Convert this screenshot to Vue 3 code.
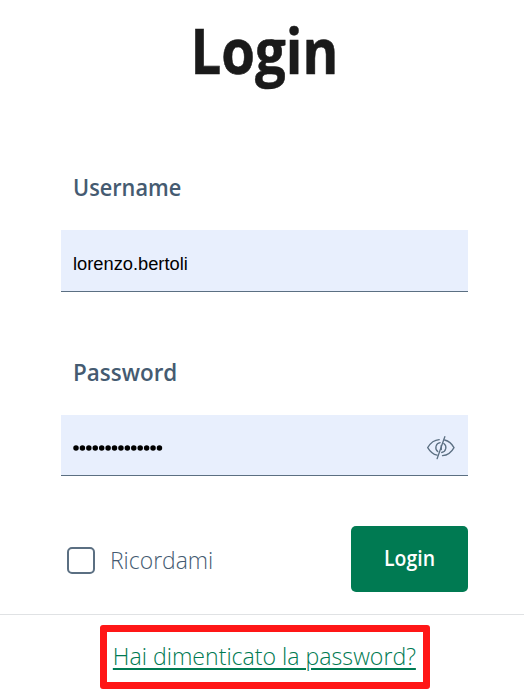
<script setup>
import { ref } from 'vue'

const username = ref('lorenzo.bertoli')
const password = ref('xxxxxxxxxxxxxx')
const remember = ref(false)
</script>

<template>
  <main class="page">
    <h1 class="title"><span class="t-title">Login</span></h1>
    <form class="form" @submit.prevent>
      <label class="label" for="username"><span class="t-user">Username</span></label>
      <div class="field field-user">
        <input id="username" v-model="username" class="input" type="text" />
      </div>
      <label class="label label-pass" for="password"><span class="t-pass">Password</span></label>
      <div class="field field-pass">
        <svg class="dots" width="92" height="8" viewBox="0 0 92 8" fill="#000">
          <circle v-for="(c, i) in password.split('')" :key="i" :cx="3 + i * 6.42" cy="4" r="2.75" />
        </svg>
        <svg class="eye" width="30" height="26" viewBox="0 0 30 26" fill="none" stroke="#5b6f82" stroke-width="1.3" stroke-linecap="round">
          <path d="M13.2 4.7C8.6 5 4.5 8 1.7 12.6C4.2 16.8 7.2 19.3 11.1 20.2" />
          <path d="M18.6 5C22.6 6 25.8 8.6 28 12.6C25.4 17.4 21.5 20.3 16.5 20.6" />
          <path d="M14.1 7.7A5 5 0 0 0 11.8 16.6" />
          <path d="M17.8 8.5A5 5 0 0 1 15.7 17.5" />
          <path d="M15.3 10.5V14.5" />
          <path d="M18.8 1.7L11.1 23.7" />
        </svg>
      </div>
      <div class="actions">
        <label class="remember">
          <input v-model="remember" class="check" type="checkbox" />
          <span class="t-rem">Ricordami</span>
        </label>
        <button class="submit" type="submit"><span class="t-submit">Login</span></button>
      </div>
    </form>
    <footer class="footer">
      <div class="frame"><a class="forgot" href="#">Hai dimenticato la password?</a></div>
    </footer>
  </main>
</template>

<style>
body {
  background: #fff;
}
</style>

<style scoped>
.page {
  box-sizing: border-box;
  height: 700px;
  overflow: hidden;
  font-family: "Open Sans", "Noto Sans", sans-serif;
  color: #455b71;
}
.title {
  height: 102px;
  margin: 0;
  padding-left: 5px;
  line-height: 100px;
  font-size: 63px;
  font-weight: 700;
  text-align: center;
  color: #1a1a1a;
}
.title span,
.label span,
.t-rem,
.t-submit {
  display: inline-block;
  transform-origin: 0 50%;
}
.title .t-title {
  transform: scaleX(0.865);
  transform-origin: 50% 50%;
  -webkit-text-stroke: 0.6px #1a1a1a;
}
.form {
  width: 407px;
  margin-left: 61px;
  padding-top: 68px;
}
.label {
  display: block;
  height: 36px;
  padding-left: 12px;
  line-height: 34px;
  font-size: 24px;
  font-weight: 600;
}
.label .t-user {
  transform: scaleX(0.905);
}
.label .t-pass {
  transform: scaleX(0.935);
}
.field {
  box-sizing: border-box;
  display: flex;
  align-items: center;
  margin-top: 24px;
  padding: 0 12px;
  background: #e8effd;
  border-bottom: 1px solid #5b6f82;
}
.field-user {
  height: 62px;
  padding-top: 7px;
}
.field-pass {
  height: 61px;
  justify-content: space-between;
}
.label-pass {
  margin-top: 63px;
}
.input {
  width: 100%;
  padding: 0;
  border: 0;
  outline: 0;
  background: transparent;
  font: 18.3px "Liberation Sans", Arial, sans-serif;
  color: #000;
}
.dots {
  margin-top: 5px;
}
.eye {
  margin: 5px 0 0;
}
.actions {
  display: flex;
  justify-content: space-between;
  align-items: center;
  height: 66px;
  margin-top: 50px;
}
.remember {
  display: flex;
  align-items: center;
  gap: 15px;
  padding: 3px 0 0 6px;
  font-size: 24px;
  line-height: 30px;
  font-weight: 300;
}
.t-rem {
  padding-bottom: 2px;
  transform: scaleX(0.955);
}
.check {
  box-sizing: border-box;
  width: 28px;
  height: 27px;
  margin: 0;
  appearance: none;
  border: 2px solid #5b6f82;
  border-radius: 5px;
}
.submit {
  width: 117px;
  height: 66px;
  padding: 0 0 2px;
  border: 0;
  border-radius: 5px;
  background: #007a52;
  color: #fff;
  font-family: inherit;
  font-size: 21px;
  font-weight: 600;
}
.t-submit {
  transform: scaleX(0.925);
  transform-origin: 50% 50%;
}
.footer {
  display: flex;
  justify-content: center;
  margin-top: 22px;
  padding: 10px 0 0 5px;
  border-top: 1px solid #e0e2e4;
}
.frame {
  box-sizing: border-box;
  display: flex;
  justify-content: center;
  width: 330px;
  height: 64px;
  border: 7px solid #ff1717;
  border-radius: 3px;
  line-height: 47px;
}
.forgot {
  font-size: 24px;
  font-weight: 300;
  color: #007a52;
  white-space: nowrap;
  text-decoration-thickness: 2px;
  text-underline-offset: 3px;
  transform: scaleX(0.963);
}
</style>
